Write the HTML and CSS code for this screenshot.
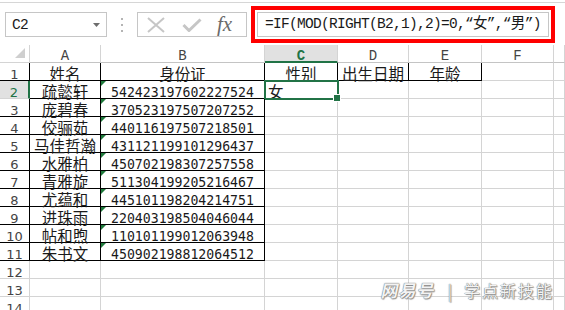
FILE: index.html
```html
<!DOCTYPE html>
<html lang="zh-CN">
  <head>
    <meta charset="UTF-8" />
    <title>身份证提取性别</title>
    <link rel="stylesheet" href="styles.css">
  </head>
  <body>
    <!-- formula bar -->
    <div class="fbar">
      <div class="namebox">
        <span>C2</span>
        <svg width="7" height="4" viewBox="0 0 7 4"><polygon points="0,0 7,0 3.5,4" fill="#6d6d6d"/></svg>
      </div>
      <div class="grip">
        <svg width="2" height="14" viewBox="0 0 2 14">
          <rect x="0" y="0" width="2" height="2" fill="#b4b4b4"/>
          <rect x="0" y="6" width="2" height="2" fill="#b4b4b4"/>
          <rect x="0" y="12" width="2" height="2" fill="#b4b4b4"/>
        </svg>
      </div>
      <div class="tools">
        <svg class="cancel" width="18" height="16" viewBox="0 0 18 16">
          <path d="M1 1 L17 15 M17 1 L1 15" stroke="#c6c6c6" stroke-width="2" fill="none"/>
        </svg>
        <svg class="enter" width="20" height="14" viewBox="0 0 20 14">
          <path d="M1.5 7 L7 12.5 L18.5 1.5" stroke="#c6c6c6" stroke-width="3" fill="none"/>
        </svg>
        <span class="fx">fx</span>
      </div>
      <div class="formula">=IF(MOD(RIGHT(B2,1),2)=0,“女”,“男”)</div>
    </div>

    <!-- sheet -->
    <div class="sheet">
      <div class="corner"><svg width="10" height="10" viewBox="0 0 10 10"><polygon points="10,0 10,10 0,10" fill="#cfcfcf"/></svg></div>
      <div class="hd">A</div><div class="hd">B</div><div class="hd on">C</div><div class="hd">D</div><div class="hd">E</div><div class="hd">F</div><div class="hd"></div>

      <div class="rh bk">1</div><div class="t bk">姓名</div><div class="t bk">身份证</div><div class="t bk">性别</div><div class="t bk">出生日期</div><div class="t bk">年龄</div><div></div><div></div>
      <div class="rh on">2</div><div class="t bk">疏懿轩</div><div class="id bk">542423197602227524</div><div class="t left cur">女</div><div></div><div></div><div></div><div></div>
      <div class="rh bk">3</div><div class="t bk">庞碧春</div><div class="id bk">370523197507207252</div><div></div><div></div><div></div><div></div><div></div>
      <div class="rh bk">4</div><div class="t bk">佼骊茹</div><div class="id bk">440116197507218501</div><div></div><div></div><div></div><div></div><div></div>
      <div class="rh bk">5</div><div class="t bk">马佳哲瀚</div><div class="id bk">431121199101296437</div><div></div><div></div><div></div><div></div><div></div>
      <div class="rh bk">6</div><div class="t bk">水雅柏</div><div class="id bk">450702198307257558</div><div></div><div></div><div></div><div></div><div></div>
      <div class="rh bk">7</div><div class="t bk">青雅旋</div><div class="id bk">511304199205216467</div><div></div><div></div><div></div><div></div><div></div>
      <div class="rh bk">8</div><div class="t bk">尤蕴和</div><div class="id bk">445101198204214751</div><div></div><div></div><div></div><div></div><div></div>
      <div class="rh bk">9</div><div class="t bk">进珠雨</div><div class="id bk">220403198504046044</div><div></div><div></div><div></div><div></div><div></div>
      <div class="rh bk">10</div><div class="t bk">帖和煦</div><div class="id bk">110101199012063948</div><div></div><div></div><div></div><div></div><div></div>
      <div class="rh bk">11</div><div class="t bk">朱书文</div><div class="id bk">450902198812064512</div><div></div><div></div><div></div><div></div><div></div>
      <div class="rh">12</div><div></div><div></div><div></div><div></div><div></div><div></div><div></div>
      <div class="rh">13</div><div></div><div></div><div></div><div></div><div></div><div></div><div></div>
      <div class="rh">14</div><div></div><div></div><div></div><div></div><div></div><div></div><div></div>
    </div>

    <div class="mark"><span class="logo">网易号</span><span class="bar">|</span>学点新技能</div>
  </body>
</html>
```

FILE: styles.css
```css
* {
  box-sizing: border-box;
}
body {
  margin: 0;
  height: 310px;
  overflow: hidden;
  position: relative;
  background: #fff;
  color: #1a1a1a;
  font-family: "Liberation Mono", "Noto Sans CJK SC", monospace;
}

/* formula bar */
.fbar {
  display: flex;
  height: 43px;
  margin-top: 2px;
  padding: 9px 0 0 5px;
  border-top: 1px solid #d6d6d6;
}
.namebox {
  display: flex;
  align-items: center;
  justify-content: space-between;
  width: 102px;
  height: 25px;
  padding: 0 6px;
  border: 1px solid #c6c6c6;
  font-size: 14.5px;
  letter-spacing: -0.7px;
}
.grip {
  display: flex;
  align-items: center;
  justify-content: center;
  width: 30px;
  height: 25px;
}
.tools {
  display: flex;
  align-items: center;
  width: 110px;
  height: 25px;
  padding-left: 9px;
  border: 1px solid #c6c6c6;
}
.enter {
  margin-left: 17px;
}
.fx {
  margin-left: 15px;
  font-family: "Liberation Serif", serif;
  font-style: italic;
  font-size: 21px;
  line-height: 23px;
  color: #6a6a6a;
}
.formula {
  width: 292px;
  height: 25px;
  margin-left: 10px;
  padding-left: 7px;
  border: 1px solid #c6c6c6;
  outline: 4px solid #f00;
  outline-offset: 2px;
  font-size: 14.5px;
  letter-spacing: -0.7px;
  line-height: 23px;
  white-space: nowrap;
}

/* sheet */
.sheet {
  display: grid;
  grid-template-columns: 30px 71px 164px 73px 71px 73px 72px 1fr;
  grid-auto-rows: 18px;
}
.sheet > div {
  border-right: 1px solid #d4d4d4;
  border-bottom: 1px solid #d4d4d4;
}
.corner {
  display: flex;
  align-items: flex-end;
  justify-content: flex-end;
  padding: 0 4px 4px 0;
}
.hd {
  padding-top: 3px;
  text-align: center;
  font-size: 14px;
  line-height: 17px;
  color: #444;
}
.sheet > .hd {
  border-bottom-color: #c4c4c4;
}
.sheet > .hd.on {
  background: #e1e1e1;
  border-bottom: 2px solid #217346;
  color: #217346;
  font-weight: bold;
}
.rh {
  padding-top: 3px;
  text-align: center;
  font-family: "DejaVu Sans", sans-serif;
  font-size: 13px;
  line-height: 18px;
  color: #444;
}
.sheet > .rh.on {
  background: #e1e1e1;
  border-right: 2px solid #217346;
  color: #217346;
}
.sheet > .bk {
  border-right-color: #000;
  border-bottom-color: #000;
}
.t {
  padding-top: 1px;
  text-align: center;
  font-family: "Noto Sans CJK SC", sans-serif;
  font-size: 15.5px;
  line-height: 18px;
  white-space: nowrap;
}
.t.left {
  padding-left: 3px;
  text-align: left;
}
.id {
  position: relative;
  padding-top: 3px;
  text-align: center;
  font-family: "DejaVu Sans Mono", monospace;
  font-size: 13.2px;
  line-height: 18px;
}
.id::before {
  content: "";
  position: absolute;
  top: 0;
  left: 0;
  border-top: 5px solid #1f7a3c;
  border-right: 5px solid transparent;
}
.cur {
  position: relative;
  outline: 2px solid #217346;
  outline-offset: -1px;
}
.cur::after {
  content: "";
  position: absolute;
  right: -4px;
  bottom: -4px;
  width: 6px;
  height: 6px;
  background: #217346;
  border: 1px solid #fff;
}

/* watermark */
.mark {
  position: absolute;
  right: 11px;
  bottom: 12px;
  font-family: "Noto Sans CJK SC", sans-serif;
  font-size: 16px;
  line-height: 16px;
  letter-spacing: 2px;
  color: #f3f3f3;
  text-shadow: 0 0 1px #6f6f6f, 0 0 1px #6f6f6f, 1px 1px 1px #9a9a9a;
  white-space: nowrap;
}
.logo {
  display: inline-block;
  font-size: 17px;
  font-weight: bold;
  letter-spacing: 1px;
  transform: skewX(-12deg);
}
.bar {
  margin: 0 10px 0 12px;
  font-weight: normal;
}
```
